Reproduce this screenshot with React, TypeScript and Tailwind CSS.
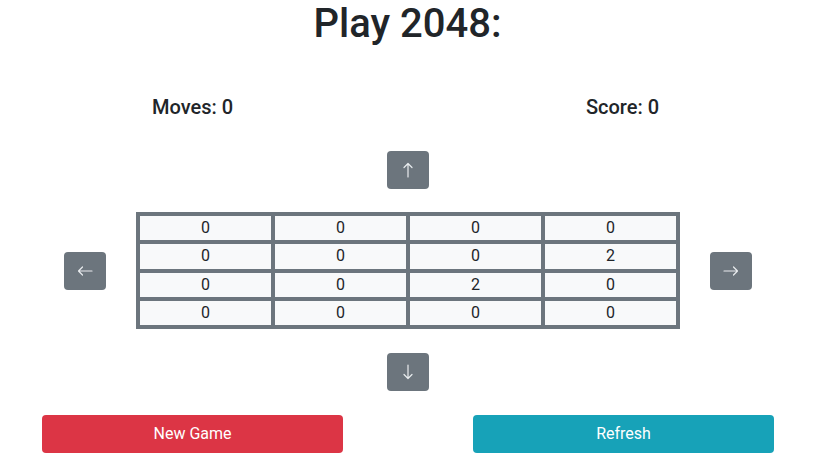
import React from 'react';

const board: number[][] = [
  [0, 0, 0, 0],
  [0, 0, 0, 2],
  [0, 0, 2, 0],
  [0, 0, 0, 0],
];

type Dir = 'up' | 'down' | 'left' | 'right';

const rotation: Record<Dir, string> = {
  up: 'rotate-0',
  right: 'rotate-90',
  down: 'rotate-180',
  left: '-rotate-90',
};

// Thin arrow, drawn pointing up, rotated for the other directions
const Arrow: React.FC<{ dir: Dir }> = ({ dir }) => (
  <svg width="16" height="16" viewBox="0 0 16 16" className={rotation[dir]}>
    <path d="M8 1.5V15M4 5.5L8 1.5L12 5.5" fill="none" stroke="#e9ecef" strokeWidth="1.2" strokeLinecap="round" strokeLinejoin="round" />
  </svg>
);

const ArrowButton: React.FC<{ dir: Dir }> = ({ dir }) => (
  <button className="w-[42px] h-[38px] rounded bg-[#6c757d] flex items-center justify-center">
    <Arrow dir={dir} />
  </button>
);

export default function App() {
  return (
    <div className="w-[815px] h-[461px] bg-white text-[#212529] font-['Roboto',_sans-serif]">
      <h1 className="text-center text-[40px] font-medium leading-[48px]">Play 2048:</h1>

      <div className="mt-[47px] flex justify-between pl-[152px] pr-[156px] text-[20px] font-medium leading-[24px]">
        <span>Moves: 0</span>
        <span>Score: 0</span>
      </div>

      <div className="mt-[32px] flex justify-center">
        <ArrowButton dir="up" />
      </div>

      <div className="mt-[23px] flex items-center">
        <div className="ml-[64px]">
          <ArrowButton dir="left" />
        </div>
        <div className="ml-[30px] w-[544px] grid grid-cols-4 gap-[4px] p-[4px] bg-[#6c757d]">
          {board.flat().map((v, i) => (
            <div key={i} className="h-[24.25px] bg-[#f8f9fa] flex items-center justify-center text-[16px]">
              {v}
            </div>
          ))}
        </div>
        <div className="ml-[30px]">
          <ArrowButton dir="right" />
        </div>
      </div>

      <div className="mt-[24px] flex justify-center">
        <ArrowButton dir="down" />
      </div>

      <div className="mt-[24px] flex justify-between pl-[42px] pr-[41px]">
        <button className="w-[301px] h-[38px] rounded bg-[#dc3545] text-white text-[16px]">New Game</button>
        <button className="w-[301px] h-[38px] rounded bg-[#17a2b8] text-white text-[16px]">Refresh</button>
      </div>
    </div>
  );
}
